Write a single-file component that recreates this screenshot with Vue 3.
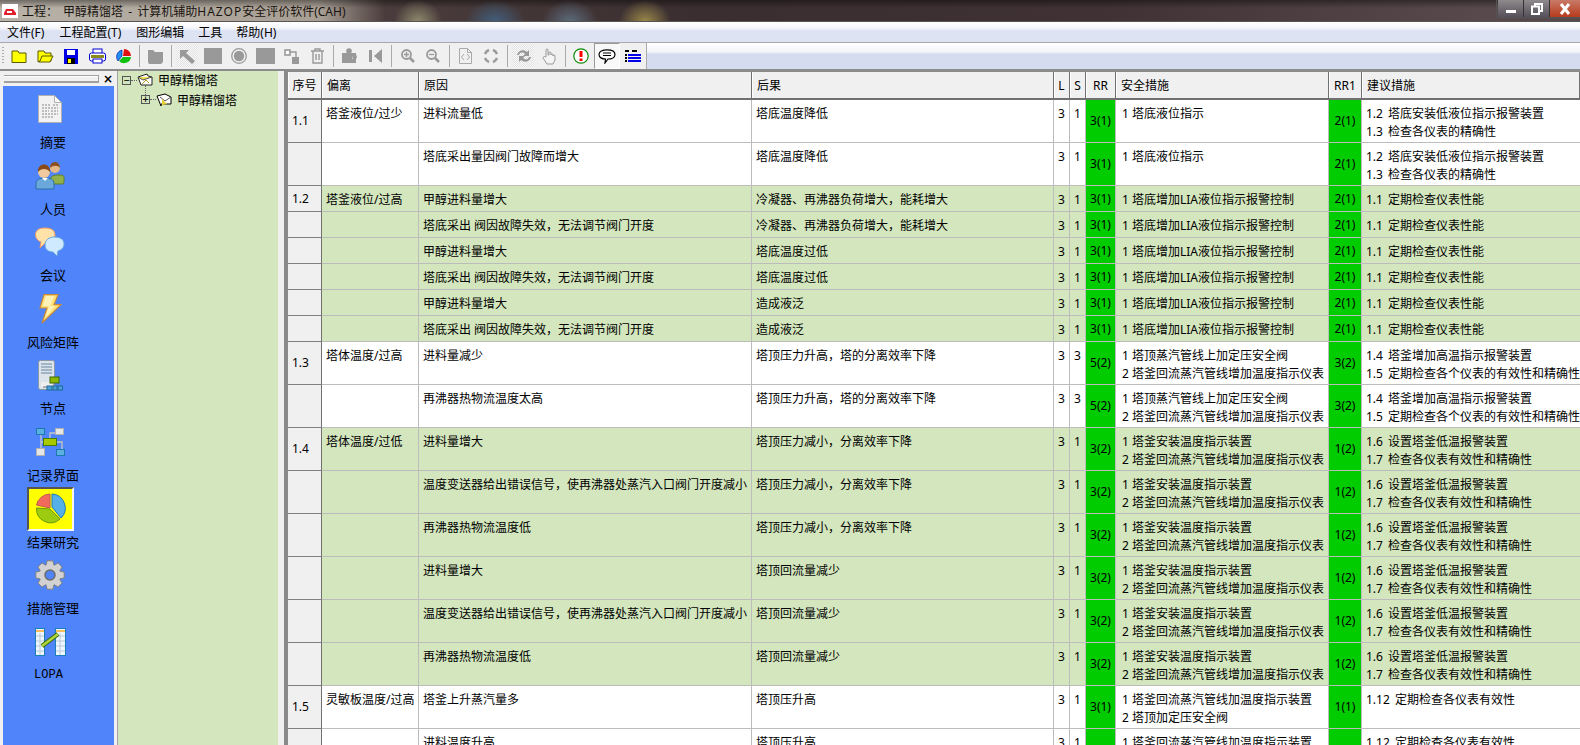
<script setup>
const sideItems = ['摘要', '人员', '会议', '风险矩阵', '节点', '记录界面', '结果研究', '措施管理', 'LOPA']

const gearPath = (() => {
  const pts = []
  for (let i = 0; i < 8; i++) {
    const a = (i * Math.PI) / 4
    const seg = [[-0.36, 10.8], [-0.2, 14.5], [0.2, 14.5], [0.36, 10.8]]
    for (const [d, r] of seg) pts.push(`${(15 + r * Math.sin(a + d)).toFixed(1)} ${(15 - r * Math.cos(a + d)).toFixed(1)}`)
  }
  return `M${pts.join('L')}Z`
})()

const m1 = { l: 3, s: 1, rr: '3(1)', safe: ['1 塔底液位指示'], rr1: '2(1)', adv: ['1.2 塔底安装低液位指示报警装置', '1.3 检查各仪表的精确性'] }
const m2 = { l: 3, s: 1, rr: '3(1)', safe: ['1 塔底增加LIA液位指示报警控制'], rr1: '2(1)', adv: ['1.1 定期检查仪表性能'] }
const m3 = { l: 3, s: 3, rr: '5(2)', safe: ['1 塔顶蒸汽管线上加定压安全阀', '2 塔釜回流蒸汽管线增加温度指示仪表'], rr1: '3(2)', adv: ['1.4 塔釜增加高温指示报警装置', '1.5 定期检查各个仪表的有效性和精确性'] }
const m4 = { l: 3, s: 1, rr: '3(2)', safe: ['1 塔釜安装温度指示装置', '2 塔釜回流蒸汽管线增加温度指示仪表'], rr1: '1(2)', adv: ['1.6 设置塔釜低温报警装置', '1.7 检查各仪表有效性和精确性'] }
const m5 = { l: 3, s: 1, rr: '3(1)', safe: ['1 塔釜回流蒸汽管线加温度指示装置', '2 塔顶加定压安全阀'], rr1: '1(1)', adv: ['1.12 定期检查各仪表有效性'] }

const stuck = '塔底采出 阀因故障失效，无法调节阀门开度'
const sig = '温度变送器给出错误信号，使再沸器处蒸汽入口阀门开度减小'
const cond = '冷凝器、再沸器负荷增大，能耗增大'
const pdrop = '塔顶压力减小，分离效率下降'
const prise = '塔顶压力升高，塔的分离效率下降'

const rows = [
  { no: '1.1', dev: '塔釜液位/过少', cause: '进料流量低', eff: '塔底温度降低', ...m1 },
  { cause: '塔底采出量因阀门故障而增大', eff: '塔底温度降低', ...m1 },
  { no: '1.2', dev: '塔釜液位/过高', cause: '甲醇进料量增大', eff: cond, green: true, short: true, ...m2 },
  { cause: stuck, eff: cond, green: true, short: true, ...m2 },
  { cause: '甲醇进料量增大', eff: '塔底温度过低', green: true, short: true, ...m2 },
  { cause: stuck, eff: '塔底温度过低', green: true, short: true, ...m2 },
  { cause: '甲醇进料量增大', eff: '造成液泛', green: true, short: true, ...m2 },
  { cause: stuck, eff: '造成液泛', green: true, short: true, ...m2 },
  { no: '1.3', dev: '塔体温度/过高', cause: '进料量减少', eff: prise, ...m3 },
  { cause: '再沸器热物流温度太高', eff: prise, ...m3 },
  { no: '1.4', dev: '塔体温度/过低', cause: '进料量增大', eff: pdrop, green: true, ...m4 },
  { cause: sig, eff: pdrop, green: true, ...m4 },
  { cause: '再沸器热物流温度低', eff: pdrop, green: true, ...m4 },
  { cause: '进料量增大', eff: '塔顶回流量减少', green: true, ...m4 },
  { cause: sig, eff: '塔顶回流量减少', green: true, ...m4 },
  { cause: '再沸器热物流温度低', eff: '塔顶回流量减少', green: true, ...m4 },
  { no: '1.5', dev: '灵敏板温度/过高', cause: '塔釜上升蒸汽量多', eff: '塔顶压升高', ...m5 },
  { cause: '进料温度升高', eff: '塔顶压升高', ...m5 },
]
</script>

<template>
  <div class="win">
    <header class="title">
      <svg class="app-ico" width="16" height="14" viewBox="0 0 16 14">
        <rect width="16" height="14" fill="#fff" />
        <path d="M2 9 4 5h7l3 4v2H2z" fill="#e0202a" />
        <rect x="5" y="7" width="5" height="2" fill="#fff" />
      </svg>
      <span class="title-text">工程：  甲醇精馏塔 - 计算机辅助<span class="latin">HAZOP</span>安全评价软件(CAH)</span>
      <div class="ctrls">
        <div class="ctrl"><i class="min"></i></div>
        <div class="ctrl"><svg width="12" height="12" viewBox="0 0 12 12" fill="none" stroke="#fff" stroke-width="2"><path d="M4 3V1h7v7H9" /><rect x="1" y="3.500" width="7" height="7.500" /></svg></div>
        <div class="ctrl close"><svg width="12" height="12" viewBox="0 0 12 12"><path d="M2 1 10 11M10 1 2 11" stroke="#fff" stroke-width="3" /></svg></div>
      </div>
    </header>

    <nav class="menu">
      <span>文件(F)</span><span>工程配置(T)</span><span>图形编辑</span><span>工具</span><span>帮助(H)</span>
    </nav>

    <div class="toolbar">
      <div class="tools">
        <div class="grip"></div>
        <div class="tb"><svg width="16" height="16" viewBox="0 0 16 16"><path d="M1 3h6l1 2h7v9.500H1z" fill="#ff0" stroke="#5a5a00" /></svg></div>
        <div class="tb"><svg width="17" height="16" viewBox="0 0 17 16"><path d="M1 3h6l1 2h6v8H3L1 14z" fill="#ff0" stroke="#5a5a00" /><path d="M3 13 5 8h11l-3 6H2z" fill="#ff0" stroke="#5a5a00" /></svg></div>
        <div class="tb"><svg width="14" height="15" viewBox="0 0 14 15"><rect width="14" height="15" fill="#0000e8" /><rect x="3" y="1" width="8" height="5" fill="#fff" /><rect x="3" y="9" width="8" height="6" fill="#000" /><rect x="4" y="10" width="3" height="4" fill="#ff0" /></svg></div>
        <div class="tb"><svg width="17" height="16" viewBox="0 0 17 16"><rect x="4" y="1" width="9" height="6" fill="#fff" stroke="#0000d0" /><rect x=".5" y="5" width="16" height="8" rx="2" fill="#fff" stroke="#0000d0" /><rect x="2" y="7" width="13" height="3" fill="#8a8a20" /><rect x="4" y="11" width="9" height="4" fill="#fff" stroke="#0000d0" /></svg></div>
        <div class="tb"><svg width="15" height="15" viewBox="0 0 15 15"><path d="M7 7 8 0a7 7 0 0 1 7 7z" fill="#e01010" /><path d="M7 8h8a7 7 0 0 1-12 4z" fill="#10c010" /><path d="M6 7 2 12A7 7 0 0 1 6 1z" fill="#2090f0" stroke="#0000a0" stroke-width=".6" /></svg></div>
        <div class="sep"></div>
        <div class="tb"><svg width="17" height="16" viewBox="0 0 17 16"><path d="M1 2h5l2 2h8v10l-2 2H2L1 14z" fill="#999" /></svg></div>
        <div class="sep"></div>
        <div class="tb on"><svg width="17" height="15" viewBox="0 0 17 15"><path d="M1 1h9L7 4l9 8-3 3-9-8-3 3z" fill="#999" /></svg></div>
        <div class="tb"><span class="gsq"></span></div>
        <div class="tb"><svg width="16" height="16" viewBox="0 0 16 16"><circle cx="8" cy="8" r="7.300" fill="none" stroke="#999" stroke-width="1.300" /><circle cx="8" cy="8" r="5.200" fill="#999" /></svg></div>
        <div class="tb"><span class="gsq wide"></span></div>
        <div class="tb"><svg width="15" height="15" viewBox="0 0 15 15"><path d="M3 3h9v9" fill="none" stroke="#999" stroke-width="1.400" /><rect x="1" y="1" width="5" height="5" fill="#fff" stroke="#999" stroke-width="1.600" /><rect x="8" y="8" width="7" height="7" fill="#999" /></svg></div>
        <div class="tb"><svg width="15" height="16" viewBox="0 0 15 16" fill="none" stroke="#999" stroke-width="1.400"><path d="M1 3h13M5 3V1h5v2M3 3v12h9V3M6 6v6M9 6v6" /></svg></div>
        <div class="sep"></div>
        <div class="tb"><svg width="16" height="16" viewBox="0 0 16 16"><circle cx="8" cy="3" r="2.800" fill="#999" /><circle cx="13.500" cy="9" r="2.400" fill="#999" /><path d="M1 5h14v3H11v3h4v4H1z" fill="#999" /></svg></div>
        <div class="tb"><svg width="13" height="14" viewBox="0 0 13 14"><rect y="1" width="3" height="12" fill="#999" /><path d="M13 0v14L5 7z" fill="#999" /></svg></div>
        <div class="sep"></div>
        <div class="tb"><svg class="shift" width="14" height="14" viewBox="0 0 14 14"><circle cx="5.500" cy="5.500" r="4.500" fill="#eee" stroke="#999" stroke-width="1.800" /><path d="M9 9l4 4" stroke="#999" stroke-width="2.500" /><path d="M3 5.500h5M5.500 3v5" stroke="#999" stroke-width="1.300" /></svg></div>
        <div class="tb"><svg width="14" height="14" viewBox="0 0 14 14"><circle cx="5.500" cy="5.500" r="4.500" fill="#eee" stroke="#999" stroke-width="1.800" /><path d="M9 9l4 4" stroke="#999" stroke-width="2.500" /><path d="M3 5.500h5" stroke="#999" stroke-width="1.300" /></svg></div>
        <div class="sep"></div>
        <div class="tb"><svg width="13" height="16" viewBox="0 0 13 16" fill="none" stroke="#aaa"><path d="M.5.500h8l4 4v11H.5zM8.500.500v4h4M5 6 2.500 9 5 12M8 6l2.500 3L8 12" /></svg></div>
        <div class="tb"><svg width="16" height="16" viewBox="0 0 16 16" fill="none" stroke="#999" stroke-width="2.400"><path d="M2 6a6.500 6.500 0 0 1 4-4M10 2a6.500 6.500 0 0 1 4 4M14 10a6.500 6.500 0 0 1-4 4M6 14a6.500 6.500 0 0 1-4-4" /></svg></div>
        <div class="sep"></div>
        <div class="tb on"><svg class="shift" width="18" height="16" viewBox="0 0 18 16"><path d="M2 7C3 2 9 1 12 4l2-2v6H8l2-2C8 4 5 4 4 7zM16 9c-1 5-7 6-10 3l-2 2V8h6l-2 2c2 2 5 2 6-1z" fill="#999" /></svg></div>
        <div class="tb"><svg width="14" height="17" viewBox="0 0 14 17"><path d="M4 9V2a1 1 0 0 1 2 0v5h1V5a1 1 0 0 1 2 0v2a1 1 0 0 1 2 0v1a1 1 0 0 1 2 0v4l-2 4H5L1 10c0-1 1-2 3-1z" fill="#f4f4f4" stroke="#999" /></svg></div>
        <div class="sep"></div>
        <div class="tb"><svg width="16" height="16" viewBox="0 0 16 16"><circle cx="8" cy="8" r="7.200" fill="#fff" stroke="#088a08" stroke-width="1.200" /><rect x="6.500" y="3" width="3" height="6" fill="#f00" /><rect x="6.500" y="10.500" width="3" height="2.500" fill="#f00" /></svg></div>
        <div class="tb pressed"><svg width="18" height="15" viewBox="0 0 18 15"><path d="M9 .8c4.500 0 8 1.700 8 4.700s-3.500 4.500-7 4.500l-3 4 .5-4C4 10 1 8.500 1 5.500S4.500.8 9 .8z" fill="#fff" stroke="#000" stroke-width="1.200" /><path d="M5 4h8M5 6.500h8" stroke="#000" /></svg></div>
        <div class="tb"><svg width="16" height="13" viewBox="0 0 16 13"><path d="M0 1h4M7 1h5M0 5h2M0 8h2M0 11h2" stroke="#000" stroke-width="1.800" /><path d="M3 5h13M3 8h13M3 11h13" stroke="#0000e8" stroke-width="2" /></svg></div>
      </div>
      <div class="tool-fill"></div>
    </div>

    <div class="main">
      <aside class="side">
        <div class="side-head"><div class="side-grip"></div><span class="side-x">×</span></div>
        <div class="side-list">
          <div v-for="(name, i) in sideItems" :key="name" class="side-item">
            <div class="side-ico" :class="{ active: i === 6 }">
              <svg v-if="i === 0" width="24" height="28" viewBox="0 0 24 28"><path d="M.5.500h16l7 7v20H.5z" fill="#f2f2f2" stroke="#b0b0b0" /><path d="M16.500.500v7h7z" fill="#fff" stroke="#b0b0b0" /><path d="M4 10h9M15 10h5M4 13h16M4 16h7M13 16h7M4 19h16M4 22h11" stroke="#8a8a8a" stroke-dasharray="2 1" /></svg>
              <svg v-else-if="i === 1" width="30" height="29" viewBox="0 0 30 29"><path d="M15 21c0-6 3-7 9-7s5 1 5 7l-1 2H17z" fill="#8fb04a" stroke="#5f7f2a" /><circle cx="20" cy="7" r="5" fill="#e5b88a" /><path d="M15 7c0-8 10-8 10 0-2-3-7-3-10 0z" fill="#8a5020" /><path d="M1 28v-5c0-5 4-6 9-6s9 1 9 6v5z" fill="#6aa8dc" stroke="#2a6fa8" /><circle cx="9" cy="11" r="6" fill="#f0c9a0" /><path d="M3 11c-1-10 13-10 12 0-3-4-9-4-12 0z" fill="#8a4a18" /><path d="M7 17l3 3 3-3z" fill="#fff" /></svg>
              <svg v-else-if="i === 2" width="30" height="30" viewBox="0 0 30 30"><path d="M10 1c6 0 10 2 10 7s-4 8-10 8l-5 5 1-6C3 14 .5 11 .5 8 .5 3 4 1 10 1z" fill="#ffe2a8" stroke="#ee9a66" /><path d="M19 10c6 0 10 2 10 7 0 4-3 6-6 7l-1 5-4-4c-5 0-8-3-8-7 0-5 4-8 9-8z" fill="#cfeaff" stroke="#66a8dc" /></svg>
              <svg v-else-if="i === 3" width="23" height="30" viewBox="0 0 23 30"><path d="M5 .7h14l-4 10h7L3 29l5-15H1z" fill="#ffe27a" stroke="#c88a3a" stroke-width="1.200" /><path d="M7 2h8l-4 10h5L6 24l4-12H4z" fill="#fff2b8" /></svg>
              <svg v-else-if="i === 4" width="25" height="31" viewBox="0 0 25 31"><rect x=".5" y=".5" width="16" height="29" rx="2" fill="#dce3ea" stroke="#8a97a5" /><path d="M3 4h11M3 7h11M3 10h11M3 13h11" stroke="#8fa6bc" stroke-width="1.500" /><rect x="3" y="22" width="11" height="5" fill="#eee" /><rect x="12" y="17" width="9" height="6" fill="#8cb800" stroke="#3f6a00" /><path d="M16 23v3M5 27h18" stroke="#777" /><rect x="9" y="26" width="5" height="4" fill="#4aa0d8" stroke="#1f6a9c" /><rect x="15" y="26" width="4" height="4" fill="#4aa0d8" stroke="#1f6a9c" /><rect x="20" y="26" width="4.500" height="4" fill="#4aa0d8" stroke="#1f6a9c" /></svg>
              <svg v-else-if="i === 5" width="29" height="28" viewBox="0 0 29 28"><path d="M5 6v16M14 10V5h6M5 14h21v8" fill="none" stroke="#c8c8c8" stroke-width="1.300" /><rect x=".5" y=".5" width="8" height="6" fill="#5cb0e0" stroke="#1c78b0" /><rect x="19.500" y=".5" width="8" height="6" fill="#e6e6e6" stroke="#b0b0b0" /><rect x="7.500" y="10.500" width="13" height="7" fill="#a8c800" stroke="#4a7a00" /><rect x=".5" y="20.500" width="8" height="7" fill="#e6e6e6" stroke="#b0b0b0" /><rect x="20.500" y="21.500" width="8" height="6" fill="#5cb0e0" stroke="#1c78b0" /></svg>
              <svg v-else-if="i === 6" width="31" height="31" viewBox="0 0 31 31"><path d="M15 15 15 1A14 14 0 0 0 1.500 12z" fill="#f26a5e" stroke="#c05a50" /><path d="M17 14V1a14 14 0 0 1 9 24z" fill="#55b0e8" stroke="#1f78b8" /><path d="M15 16 25 26A14 14 0 0 1 1.500 15z" fill="#9ccb10" stroke="#6c9a08" /></svg>
              <svg v-else-if="i === 7" width="30" height="30" viewBox="0 0 30 30"><path :d="gearPath" fill="#d2d2d2" stroke="#808080" stroke-linejoin="round" /><circle cx="15" cy="15" r="5" fill="#4f84fb" stroke="#6a6a6a" stroke-width="1.500" /></svg>
              <svg v-else width="31" height="28" viewBox="0 0 31 28"><rect x=".5" y=".5" width="9" height="27" fill="#eef7fd" stroke="#1c80b8" /><rect x="20.500" y=".5" width="10" height="27" fill="#eef7fd" stroke="#1c80b8" /><path d="M1 3h8M21 3h9" stroke="#f6bd60" stroke-width="2" /><path d="M1 8h8M1 13h8M1 18h8M1 23h8M21 8h9M21 13h9M21 18h9M21 23h9M5 5v22M25 5v22" stroke="#b8c8d8" /><path d="M7 18 23 6" stroke="#3f6a00" stroke-width="4.500" /><path d="M7 18 23 6" stroke="#b0d640" stroke-width="2.500" /></svg>
            </div>
            <div class="side-label" :class="{ lopa: i === 8 }">{{ name }}</div>
          </div>
        </div>
      </aside>

      <section class="tree">
        <div class="tree-row first">
          <span class="tbox">−</span><span class="dots"></span>
          <svg width="16" height="14" viewBox="0 0 16 14"><path d="M1 4l9-3 1 2 4 1v8H4z" fill="#fff" stroke="#222" /><path d="M1 4l5 3 9-3" fill="#f2dc50" stroke="#555" /><path d="M5 11l4-4 3 3" fill="none" stroke="#b09a20" /></svg>
          <span class="tree-text">甲醇精馏塔</span>
        </div>
        <div class="tree-row second">
          <span class="tbox">+</span><span class="dots"></span>
          <svg width="16" height="14" viewBox="0 0 16 14"><path d="M1 3l8-2 6 3v7H5v2z" fill="#fff" stroke="#000" /><path d="M4 4l5 4 6-4" fill="none" stroke="#555" /><path d="M6 6l5 5-5 1z" fill="#e8d030" /></svg>
          <span class="tree-text">甲醇精馏塔</span>
        </div>
      </section>

      <div class="split"></div>

      <section class="grid-wrap">
        <div class="row head">
          <div class="hc c">序号</div><div class="hc">偏离</div><div class="hc">原因</div><div class="hc">后果</div>
          <div class="hc c">L</div><div class="hc c">S</div><div class="hc c">RR</div><div class="hc">安全措施</div>
          <div class="hc c">RR1</div><div class="hc">建议措施</div>
        </div>
        <div v-for="(r, i) in rows" :key="i" class="row" :class="{ green: r.green, short: r.short }">
          <div class="cell no">{{ r.no }}</div>
          <div class="cell">{{ r.dev }}</div>
          <div class="cell">{{ r.cause }}</div>
          <div class="cell">{{ r.eff }}</div>
          <div class="cell num">{{ r.l }}</div>
          <div class="cell num">{{ r.s }}</div>
          <div class="cell risk">{{ r.rr }}</div>
          <div class="cell safe"><div v-for="t in r.safe" :key="t">{{ t }}</div></div>
          <div class="cell risk">{{ r.rr1 }}</div>
          <div class="cell last"><div v-for="t in r.adv" :key="t">{{ t }}</div></div>
        </div>
      </section>
    </div>
  </div>
</template>

<style scoped>
.win {
  width: 1580px;
  height: 745px;
  overflow: hidden;
  display: flex;
  flex-direction: column;
  background: #f0f0f0;
  font-family: "Noto Sans", "Noto Sans CJK SC", sans-serif;
  font-size: 12px;
  color: #000;
}

.title {
  height: 21px;
  flex: none;
  display: flex;
  align-items: center;
  background:
    radial-gradient(ellipse 24px 22px at 418px 22px, #8f8a6c, transparent),
    radial-gradient(ellipse 30px 22px at 495px 22px, #42607e, transparent),
    radial-gradient(ellipse 28px 22px at 570px 22px, #5c6c7c, transparent),
    radial-gradient(ellipse 26px 22px at 645px 22px, #9c8a4a, transparent),
    linear-gradient(#0006, #0000 8px),
    linear-gradient(90deg, #b8b2a8 0, #a89f94 320px, #4a3c3c 385px, #3a2e30 700px, #3f3134 1100px, #57494c 1480px);
}
.app-ico { margin: 0 4px 0 2px; flex: none; }
.title-text { color: #1a1410; white-space: pre; word-spacing: 2px; }
.latin { letter-spacing: 1px; }
.ctrls { margin-left: auto; display: flex; align-self: flex-start; height: 17px; padding-left: 1px; border: 1px solid #555; border-width: 0 0 1px 1px; border-radius: 0 0 0 4px; }
.ctrl { width: 26px; display: flex; align-items: center; justify-content: center; background: linear-gradient(#8e8a8c, #55505a); border-right: 1px solid #333; box-sizing: border-box; }
.ctrl.close { width: 30px; border: 0; background: linear-gradient(#c77a68, #b83a1c); }
.min { display: block; width: 10px; height: 3px; margin-top: 5px; background: #fff; }

.menu {
  height: 22px;
  flex: none;
  box-sizing: border-box;
  display: flex;
  align-items: center;
  gap: 14px;
  padding: 0 0 0 7px;
  border-top: 1px solid #555;
  border-bottom: 1px solid #a9a9a9;
  background: linear-gradient(#fff 0, #f6f7fb 6px, #dee3f3 9px, #dee3f3 100%);
}
.menu span:nth-child(2), .menu span:nth-child(3) { margin-left: 1px; }

.toolbar { height: 26px; flex: none; display: flex; }
.tools { display: flex; align-items: center; background: #f0f0f0; width: 646px; border-right: 1px solid #aaa; }
.grip { width: 6px; height: 18px; flex: none; background: repeating-linear-gradient(#aaa 0 1px, transparent 1px 3px) 2px 0 / 2px 18px no-repeat; }
.tb { width: 26px; height: 26px; flex: none; display: flex; align-items: center; justify-content: center; box-sizing: border-box; }
.tb.on { background: repeating-conic-gradient(#e2e2e2 0 25%, #f8f8f8 0 50%) 0 0 / 2px 2px; margin: 2px; width: 22px; height: 22px; }
.tb.pressed { background: #f8f8f8; border: 1px solid; border-color: #999 #fff #fff #999; }
.shift { margin-left: 2px; }
.gsq { display: block; width: 18px; height: 16px; background: #999; }
.gsq.wide { width: 19px; }
.sep { width: 6px; height: 22px; flex: none; background: linear-gradient(#aaa, #aaa) center / 1px 100% no-repeat; }
.tool-fill { flex: 1; background: linear-gradient(#fff 0, #f4f5fa 9px, #d6dcef 11px); }

.main { flex: 1; min-height: 0; display: flex; border-top: 2px solid #8c8c8c; }

.side { width: 117px; flex: none; padding: 0 3px; box-sizing: border-box; }
.side-head { height: 15px; display: flex; align-items: center; padding: 0 2px 0 1px; gap: 4px; }
.side-grip { flex: 1; height: 5px; border-top: 1px solid #a0a0a0; border-bottom: 2px solid #a0a0a0; border-right: 1px solid #a0a0a0; box-shadow: inset 0 1px #fff; }
.side-x { font-size: 12px; font-weight: 900; line-height: 12px; width: 9px; font-family: "DejaVu Sans", sans-serif; }
.side-list { height: 660px; background: #4f84fb; padding: 1px 11px 0 0; box-sizing: border-box; }
.side-item { height: 66.6px; display: flex; flex-direction: column; align-items: center; }
.side-ico { height: 44px; width: 47px; margin-right: 6px; flex: none; display: flex; align-items: center; justify-content: center; box-sizing: border-box; }
.side-ico.active { background: #ff0; border: 2px solid; border-color: #555 #f4f4f4 #f4f4f4 #555; }
.side-label { height: 22.6px; line-height: 22px; font-size: 13px; white-space: nowrap; }
.side-label.lopa { font-family: "Liberation Mono", monospace; font-size: 12px; margin-right: 9px; }

.tree { width: 161px; flex: none; background: #d3e6bd; border-left: 1px solid #a4a4a4; box-sizing: border-box; }
.tree-row { display: flex; align-items: center; white-space: nowrap; }
.tree-row.first { height: 18px; padding-left: 4px; }
.tree-row.second { height: 21px; padding-left: 23px; }
.tbox { width: 9px; height: 9px; flex: none; border: 1px solid #555; box-sizing: border-box; display: flex; align-items: center; justify-content: center; font-size: 10px; line-height: 7px; position: relative; font-family: "DejaVu Sans Mono", monospace; }
.second .tbox::before { content: ""; position: absolute; left: 3px; top: -11px; height: 10px; border-left: 1px dotted #666; }
.dots { width: 6px; flex: none; border-top: 1px dotted #666; }
.tree-text { margin-left: 5px; }

.split { width: 6px; flex: none; }

.grid-wrap { flex: 1; min-width: 0; overflow: hidden; box-sizing: border-box; border-left: 4px solid #8a8a8a; border-top: 1px solid #8a8a8a; }

.row { display: grid; grid-template-columns: 34px 97px 333px 302px 16px 16px 30px 213px 33px 218px; height: 43px; box-sizing: border-box; background: #fff; }
.row.green { background: #d3e6bd; }
.row.short { height: 26px; }
.row.head { height: 28px; background: #f0f0f0; }

.hc { display: flex; align-items: center; padding-left: 5px; box-sizing: border-box; border-right: 1px solid #707070; border-bottom: 2px solid #707070; box-shadow: inset 1px 0 #fff; white-space: nowrap; overflow: hidden; }
.hc.c { justify-content: center; padding: 0; }

.cell { padding: 5px 0 0 4px; line-height: 17.500px; box-sizing: border-box; border-right: 1px solid #bcbcbc; border-bottom: 1px solid #bcbcbc; white-space: nowrap; overflow: hidden; }
.cell.safe { padding-left: 6px; }
.cell.last { border-right: 0; word-spacing: 2px; }
.cell.no { display: flex; align-items: center; padding: 0 0 0 4px; background: #f0f0f0; border-right-color: #707070; border-bottom-color: #808080; }
.cell.risk { display: flex; align-items: center; justify-content: center; padding: 0; background: #00cc00; }
</style>

<style>
html, body { margin: 0; overflow: hidden; }
</style>
